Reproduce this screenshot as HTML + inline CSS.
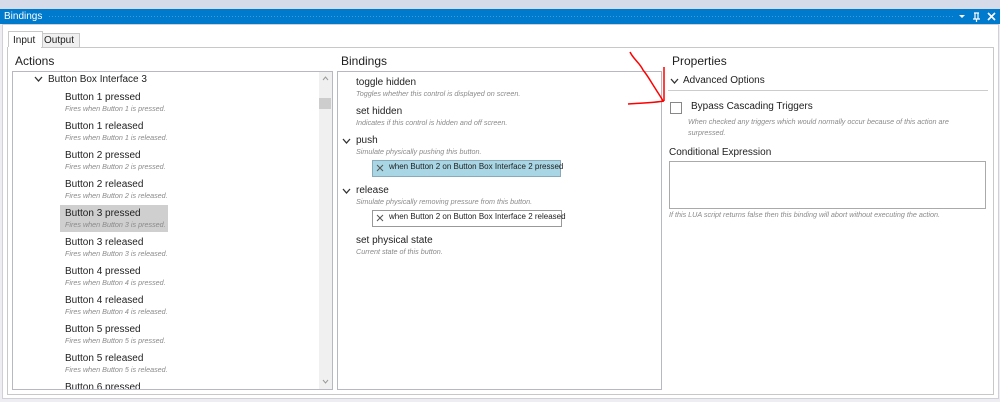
<!DOCTYPE html>
<html><head><style>
body{margin:0;width:1000px;height:402px;background:#eeeef2;font-family:"Liberation Sans",sans-serif;position:relative;overflow:hidden;color:#1e1e1e}
.a{position:absolute}
.t{font-size:10px;white-space:nowrap}
.d{font-size:7.2px;font-style:italic;color:#8a8a8a;white-space:nowrap}
.h{font-size:12px;white-space:nowrap}
.cv{position:absolute;width:9px;height:6px}
</style></head><body>
<div class="a" style="left:0;top:0;width:1000px;height:9px;background:#d6dbe9"></div>
<div class="a" style="left:0;top:9px;width:1000px;height:15px;background:#007acc"></div>
<div class="a" style="left:48px;top:15px;width:906px;height:4px;background-image:radial-gradient(#3f9bd9 0.6px,transparent 0.7px);background-size:3px 3px"></div>
<div class="a t" style="left:4px;top:11px;color:#fff;font-size:10px">Bindings</div>
<svg class="a" style="left:955px;top:10px" width="45" height="14"><path d="M4 5 L10 5 L7 8 Z" fill="#fff"/><path d="M20 3 L20 9 M23 3 L23 9 M19 3 L24 3 M18 9 L25 9 M21.5 9 L21.5 12" stroke="#fff" stroke-width="1.2" fill="none"/><path d="M33 3 L40 10 M40 3 L33 10" stroke="#fff" stroke-width="1.6"/></svg>
<div class="a" style="left:2px;top:24px;width:995px;height:373px;background:#fff;border:1px solid #d0d0d8"></div>
<div class="a" style="left:8px;top:31px;width:33px;height:16px;background:#fff;border:1px solid #c8c8c8;border-bottom:none"></div>
<div class="a t" style="left:13px;top:35px">Input</div>
<div class="a" style="left:42px;top:33px;width:36px;height:13px;background:#f0f0f0;border:1px solid #c8c8c8;border-bottom:none"></div>
<div class="a t" style="left:44px;top:35px">Output</div>
<div class="a" style="left:7px;top:47px;width:985px;height:346px;border:1px solid #c8c8c8"></div>
<div class="a" style="left:8px;top:47px;width:33px;height:1px;background:#fff"></div>
<div class="a h" style="left:15px;top:54px">Actions</div>
<div class="a" style="left:12px;top:71px;width:319px;height:317px;border:1px solid #b8b8c0;overflow:hidden">
<div class="a" style="right:0;top:0;width:13px;height:317px;background:#f0f0f0"></div>
<div class="a" style="right:1px;top:26px;width:12px;height:11px;background:#cdcdcd"></div>
<svg class="a" style="right:3px;top:4px" width="7" height="5"><path d="M1 4 L3.5 1 L6 4" stroke="#999" fill="none"/></svg>
<svg class="a" style="right:3px;top:307px" width="7" height="5"><path d="M1 1 L3.5 4 L6 1" stroke="#999" fill="none"/></svg>
<div class="a" style="left:47px;top:133px;width:108px;height:27px;background:#cfcfcf"></div>
<svg class="cv" style="left:21px;top:4px"><path d="M1 1 L4.5 5 L8 1" stroke="#333" stroke-width="1.3" fill="none"/></svg>
<div class="a t" style="left:35px;top:2px">Button Box Interface 3</div>
<div class="a t" style="left:52px;top:20px">Button 1 pressed</div><div class="a d" style="left:52px;top:32px">Fires when Button 1 is pressed.</div>
<div class="a t" style="left:52px;top:49px">Button 1 released</div><div class="a d" style="left:52px;top:61px">Fires when Button 1 is released.</div>
<div class="a t" style="left:52px;top:78px">Button 2 pressed</div><div class="a d" style="left:52px;top:90px">Fires when Button 2 is pressed.</div>
<div class="a t" style="left:52px;top:107px">Button 2 released</div><div class="a d" style="left:52px;top:119px">Fires when Button 2 is released.</div>
<div class="a t" style="left:52px;top:136px">Button 3 pressed</div><div class="a d" style="left:52px;top:148px">Fires when Button 3 is pressed.</div>
<div class="a t" style="left:52px;top:165px">Button 3 released</div><div class="a d" style="left:52px;top:177px">Fires when Button 3 is released.</div>
<div class="a t" style="left:52px;top:194px">Button 4 pressed</div><div class="a d" style="left:52px;top:206px">Fires when Button 4 is pressed.</div>
<div class="a t" style="left:52px;top:223px">Button 4 released</div><div class="a d" style="left:52px;top:235px">Fires when Button 4 is released.</div>
<div class="a t" style="left:52px;top:252px">Button 5 pressed</div><div class="a d" style="left:52px;top:264px">Fires when Button 5 is pressed.</div>
<div class="a t" style="left:52px;top:281px">Button 5 released</div><div class="a d" style="left:52px;top:293px">Fires when Button 5 is released.</div>
<div class="a t" style="left:52px;top:310px">Button 6 pressed</div>
</div>
<div class="a h" style="left:341px;top:54px">Bindings</div>
<div class="a" style="left:337px;top:71px;width:323px;height:317px;border:1px solid #b8b8c0">
<div class="a t" style="left:18px;top:5px">toggle hidden</div><div class="a d" style="left:18px;top:17px">Toggles whether this control is displayed on screen.</div>
<div class="a t" style="left:18px;top:34px">set hidden</div><div class="a d" style="left:18px;top:46px">Indicates if this control is hidden and off screen.</div>
<svg class="cv" style="left:4px;top:66px"><path d="M1 1 L4.5 5 L8 1" stroke="#333" stroke-width="1.3" fill="none"/></svg>
<div class="a t" style="left:18px;top:63px">push</div><div class="a d" style="left:18px;top:75px">Simulate physically pushing this button.</div>
<div class="a" style="left:34px;top:88px;width:187px;height:15px;background:#a8d6e4;border:1px solid #8ab"></div>
<svg class="a" style="left:38px;top:92px" width="8" height="8"><path d="M1 1 L7 7 M7 1 L1 7" stroke="#555" stroke-width="1"/></svg>
<div class="a t" style="left:51px;top:90px;font-size:8px">when Button 2 on Button Box Interface 2 pressed</div>
<svg class="cv" style="left:4px;top:116px"><path d="M1 1 L4.5 5 L8 1" stroke="#333" stroke-width="1.3" fill="none"/></svg>
<div class="a t" style="left:18px;top:113px">release</div><div class="a d" style="left:18px;top:125px">Simulate physically removing pressure from this button.</div>
<div class="a" style="left:34px;top:138px;width:188px;height:15px;background:#fff;border:1px solid #999"></div>
<svg class="a" style="left:38px;top:142px" width="8" height="8"><path d="M1 1 L7 7 M7 1 L1 7" stroke="#555" stroke-width="1"/></svg>
<div class="a t" style="left:51px;top:140px;font-size:8px">when Button 2 on Button Box Interface 2 released</div>
<div class="a t" style="left:18px;top:163px">set physical state</div><div class="a d" style="left:18px;top:175px">Current state of this button.</div>
</div>
<div class="a h" style="left:672px;top:54px">Properties</div>
<svg class="cv" style="left:670px;top:78px"><path d="M1 1 L4.5 5 L8 1" stroke="#333" stroke-width="1.3" fill="none"/></svg>
<div class="a t" style="left:683px;top:75px">Advanced Options</div>
<div class="a" style="left:668px;top:90px;width:320px;height:1px;background:#ccc"></div>
<div class="a" style="left:670px;top:102px;width:10px;height:10px;border:1px solid #888;background:#fff"></div>
<div class="a t" style="left:691px;top:101px">Bypass Cascading Triggers</div>
<div class="a d" style="left:688px;top:117px">When checked any triggers which would normally occur because of this action are</div>
<div class="a d" style="left:688px;top:128px">surpressed.</div>
<div class="a t" style="left:669px;top:147px">Conditional Expression</div>
<div class="a" style="left:669px;top:161px;width:315px;height:46px;border:1px solid #aaa;background:#fff"></div>
<div class="a d" style="left:669px;top:210px">If this LUA script returns false then this binding will abort without executing the action.</div>
<svg class="a" style="left:0;top:0" width="1000" height="402"><g fill="none" stroke="#f00" stroke-width="1.5"><path d="M630 52 C634 60 640 63 643 70 C648 76 651 82 655 88 C658 93 661 97 663 101"/><path d="M664 67 L664 101"/><path d="M628 104 C640 103 652 103 664 101"/></g></svg>
</body></html>
